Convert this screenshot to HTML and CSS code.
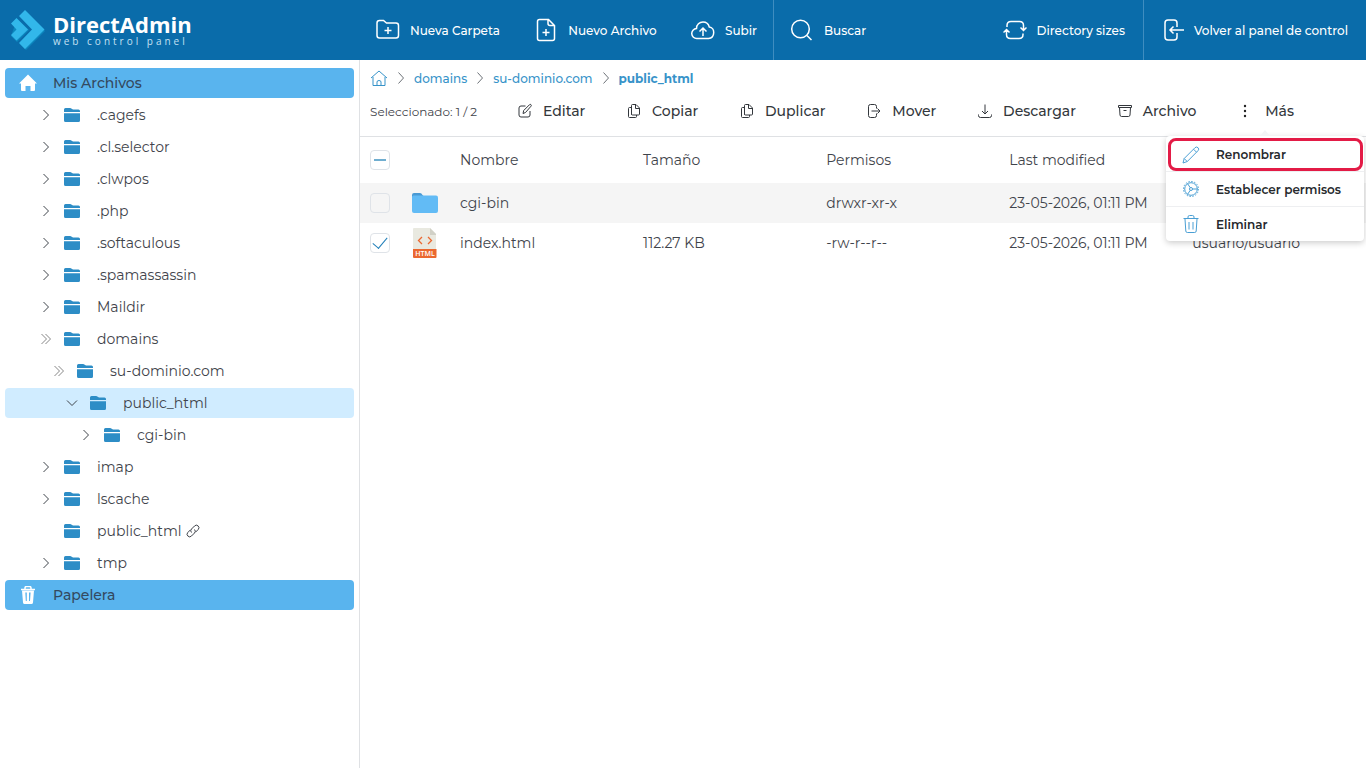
FILE: index.html
```html
<!DOCTYPE html>
<html lang="es">
<head>
<meta charset="utf-8">
<meta name="viewport" content="width=device-width, initial-scale=1">
<title>DirectAdmin - public_html</title>
<link rel="stylesheet" href="styles.css">
</head>
<body>
<svg class="defs" aria-hidden="true">
  <symbol id="folder" viewBox="0 0 16 14"><path d="M0 4V1.5Q0 0 1.5 0H6q1 0 1.7.7L9 1.5h5.500q1.500 0 1.500 1.500v1zM0 5.200h16v7.300q0 1.500-1.500 1.500h-13Q0 14 0 12.500z" fill="currentColor"/></symbol>
  <symbol id="right" viewBox="0 0 16 16"><path d="M5.500 3l5 5-5 5"/></symbol>
  <symbol id="crumb" viewBox="0 0 16 16"><path d="M5.500 2.500l5 5.500-5 5.500"/></symbol>
  <symbol id="double" viewBox="0 0 16 16"><path d="M3.500 3l5 5-5 5M7.500 3l5 5-5 5"/></symbol>
  <symbol id="down" viewBox="0 0 16 16"><path d="M3 5.500l5 5 5-5"/></symbol>
  <symbol id="copy" viewBox="0 0 16 16"><path d="M5.500 11.500V2.500q0-1 1-1H10l3.500 3.500v6q0 1-1 1h-6q-1 0-1-1zM9.500 1.500V5.500h4M5.500 4.500h-2q-1 0-1 1v8q0 1 1 1h6q1 0 1-1v-1.500"/></symbol>
</svg>

<header class="topbar">
  <a class="brand" href="#">
    <svg class="brand-mark" viewBox="0 0 34 40" aria-hidden="true">
      <path d="M15 1l19 20-19 19-6-6 13-14z" fill="#0c86be"/>
      <path d="M14 0l19.500 19.500L14 39l-6-6 13-13.500L8 6z" fill="#32b7ea"/>
      <path d="M6 9l12 11L6 32l-6-6z" fill="#0c86be"/>
      <path d="M5.500 8L17 19.500 5.500 30.500 0 25l5.500-5.500L0 13.500z" fill="#32b7ea"/>
    </svg>
    <span class="brand-text">
      <span class="brand-name">DirectAdmin</span>
      <span class="brand-tag">web control panel</span>
    </span>
  </a>
  <nav class="top-actions" aria-label="Acciones">
    <button class="top-btn" type="button">
      <svg class="icon24" viewBox="0 0 24 24"><path d="M1 5q0-2.500 2.500-2.500h4L10.500 5h9.500q2.500 0 2.500 2.500v10q0 2.500-2.500 2.500H3.500Q1 20 1 17.500zM12 9v7M8.500 12.500h7"/></svg>Nueva Carpeta</button>
    <button class="top-btn" type="button">
      <svg class="icon24" viewBox="0 0 24 24"><path d="M3.500 3.500q0-2 2-2h9l6 6v13q0 2-2 2h-13q-2 0-2-2zM14 1.500v4q0 2 2 2h4.500M12 11v7M8.500 14.500h7"/></svg>Nuevo Archivo</button>
    <button class="top-btn" type="button">
      <svg class="icon24" viewBox="0 0 24 24"><path d="M6 20.500a5 5 0 0 1-.5-10C5.500 6.500 8.500 4 12 4c3.500 0 5.500 2 6.300 5 6 .5 6 11-.8 11.500zM12 18v-7.500M8.500 13.500L12 10l3.500 3.500"/></svg>Subir</button>
  </nav>
  <button class="top-btn search" type="button">
    <svg class="icon24" viewBox="0 0 24 24"><circle cx="10.500" cy="11" r="8.800"/><path d="M17 17.500l4.500 4.500"/></svg>Buscar</button>
  <button class="top-btn sizes" type="button">
    <svg class="icon24" viewBox="0 0 24 24"><path d="M4 9V7.500q0-4 4-4h8.500q4 0 4 4V12M17.500 9.500l3 3 3-3M20 15.500v1q0 4-4 4H7.500q-4 0-4-4V12M.5 14.500l3-3 3 3"/></svg>Directory sizes</button>
  <a class="top-btn back" href="#">
    <svg class="icon20" viewBox="0 0 20 24"><path d="M13 9V5q0-3-3-3H4Q1 2 1 5v14q0 3 3 3h6q3 0 3-3v-4M20 12H6M9.500 8.500L6 12l3.500 3.500"/></svg>Volver al panel de control</a>
</header>

<div class="workspace">
  <aside class="sidebar">
    <ul class="tree">
      <li><a class="root" href="#"><svg class="root-icon" viewBox="0 0 18 18"><path d="M9 .5L18 9.500h-2v6.500q0 1-1 1h-3.500v-5h-5v5H3q-1 0-1-1V9.500H0z" fill="#fff"/></svg>Mis Archivos</a></li>
      <li><a class="node" href="#"><svg class="arrow"><use href="#right"/></svg><svg class="folder"><use href="#folder"/></svg>.cagefs</a></li>
      <li><a class="node" href="#"><svg class="arrow"><use href="#right"/></svg><svg class="folder"><use href="#folder"/></svg>.cl.selector</a></li>
      <li><a class="node" href="#"><svg class="arrow"><use href="#right"/></svg><svg class="folder"><use href="#folder"/></svg>.clwpos</a></li>
      <li><a class="node" href="#"><svg class="arrow"><use href="#right"/></svg><svg class="folder"><use href="#folder"/></svg>.php</a></li>
      <li><a class="node" href="#"><svg class="arrow"><use href="#right"/></svg><svg class="folder"><use href="#folder"/></svg>.softaculous</a></li>
      <li><a class="node" href="#"><svg class="arrow"><use href="#right"/></svg><svg class="folder"><use href="#folder"/></svg>.spamassassin</a></li>
      <li><a class="node" href="#"><svg class="arrow"><use href="#right"/></svg><svg class="folder"><use href="#folder"/></svg>Maildir</a></li>
      <li><a class="node" href="#"><svg class="arrow double"><use href="#double"/></svg><svg class="folder"><use href="#folder"/></svg>domains</a>
        <ul class="tree level-1">
          <li><a class="node" href="#"><svg class="arrow double"><use href="#double"/></svg><svg class="folder"><use href="#folder"/></svg>su-dominio.com</a></li>
        </ul>
        <ul class="tree level-2">
          <li><a class="node current" href="#"><svg class="arrow"><use href="#down"/></svg><svg class="folder"><use href="#folder"/></svg>public_html</a></li>
        </ul>
        <ul class="tree level-3">
          <li><a class="node" href="#"><svg class="arrow"><use href="#right"/></svg><svg class="folder"><use href="#folder"/></svg>cgi-bin</a></li>
        </ul>
      </li>
      <li><a class="node" href="#"><svg class="arrow"><use href="#right"/></svg><svg class="folder"><use href="#folder"/></svg>imap</a></li>
      <li><a class="node" href="#"><svg class="arrow"><use href="#right"/></svg><svg class="folder"><use href="#folder"/></svg>lscache</a></li>
      <li><a class="node" href="#"><svg class="arrow"></svg><svg class="folder"><use href="#folder"/></svg>public_html<svg class="link-icon" viewBox="0 0 14 14"><path d="M5.500 8.500a2.500 2.500 0 0 1 0-3.500l3-3a2.500 2.500 0 0 1 3.700 3.500L9.500 8.200M8.500 5.500a2.500 2.500 0 0 1 0 3.500l-3 3A2.500 2.500 0 0 1 1.800 8.500L4.500 5.800"/></svg></a></li>
      <li><a class="node" href="#"><svg class="arrow"><use href="#right"/></svg><svg class="folder"><use href="#folder"/></svg>tmp</a></li>
      <li><a class="root" href="#"><svg class="root-icon" viewBox="0 0 18 18"><path d="M2 3.500h14M6 3V2q0-1.500 1.500-1.500h3Q12 .5 12 2v1" stroke="#fff" stroke-width="1.500" fill="none"/><path fill-rule="evenodd" d="M3 4.500h12l-1 12q-.2 1.500-1.500 1.500h-7Q4.200 18 4 16.500zM6.300 6.500l.5 8.500h1V6.500zM10 6.500V15h1l.6-8.500z" fill="#fff"/></svg>Papelera</a></li>
    </ul>
  </aside>

  <main class="content">
    <nav class="crumbs" aria-label="Ruta">
      <a href="#" aria-label="Inicio"><svg class="home" viewBox="0 0 18 18"><path d="M1 9L9 2l8 7M3 8v8.500h12V8M7 16.500V13q0-1.500 2-1.500t2 1.500v3.500"/></svg></a>
      <svg class="sep"><use href="#crumb"/></svg><a href="#">domains</a>
      <svg class="sep"><use href="#crumb"/></svg><a href="#">su-dominio.com</a>
      <svg class="sep"><use href="#crumb"/></svg><a class="here" href="#">public_html</a>
    </nav>

    <div class="toolbar">
      <span class="selected">Seleccionado: 1 / 2</span>
      <div class="tools">
        <button class="tool" type="button"><svg class="icon16" viewBox="0 0 16 16"><path d="M8.500 3H4Q2 3 2 5v7q0 2 2 2h7q2 0 2-2V8M6 10.500l.7-3L12.500 1.700q.8-.7 1.500 0t0 1.500L8.500 9.500z"/></svg>Editar</button>
        <button class="tool" type="button"><svg class="icon16"><use href="#copy"/></svg>Copiar</button>
        <button class="tool" type="button"><svg class="icon16"><use href="#copy"/></svg>Duplicar</button>
        <button class="tool" type="button"><svg class="icon16" viewBox="0 0 16 16"><path d="M10.500 5.500v-2q0-2-2-2h-4q-2 0-2 2v9q0 2 2 2h4q2 0 2-2v-2M5.500 8H14M11.500 5.500L14 8l-2.500 2.500"/></svg>Mover</button>
        <button class="tool" type="button"><svg class="icon16" viewBox="0 0 16 16"><path d="M8 1.500v9.500M5 8l3 3 3-3M1.500 11.500v1q0 2 2 2h9q2 0 2-2v-1"/></svg>Descargar</button>
        <button class="tool" type="button"><svg class="icon16" viewBox="0 0 16 16"><path d="M1.500 2.500h13v2h-13zM2.500 4.500l.5 7.500q.2 1.500 1.500 1.500h7q1.300 0 1.500-1.500l.5-7.500M6.500 7.500h3"/></svg>Archivo</button>
        <button class="tool more" type="button" aria-expanded="true"><svg class="icon16" viewBox="0 0 16 16"><g fill="#222" stroke="none"><circle cx="8" cy="3" r="1.200"/><circle cx="8" cy="8" r="1.200"/><circle cx="8" cy="13" r="1.200"/></g></svg>Más</button>
      </div>
      <div class="menu">
        <button class="menu-item marked" type="button"><svg class="icon18" viewBox="0 0 18 18"><path d="M1 17l1.200-4.500L13 1.700q1.500-1.400 3 0t0 3L5.300 15.500zM2.200 12.500l3 3M11.500 3.200l3 3"/></svg>Renombrar</button>
        <button class="menu-item" type="button"><svg class="icon18" viewBox="0 0 18 18"><circle cx="9" cy="9" r="6.300"/><circle cx="9" cy="9" r="7.500" stroke-dasharray="1.500 1.445"/><circle cx="9" cy="9" r="1.500"/><path d="M10.500 9h5M8.200 7.700L5.500 3.500M8.200 10.300l-2.700 4.200"/></svg>Establecer permisos</button>
        <button class="menu-item" type="button"><svg class="icon18" viewBox="0 0 18 18"><path d="M1.500 3.500h15M6 3.500V2q0-1.500 1.500-1.500h3Q12 .5 12 2v1.500M3 4l.8 12q.1 1.500 1.500 1.500h7.400q1.400 0 1.500-1.500L15 4M7 7v7.500M11 7v7.500"/></svg>Eliminar</button>
      </div>
    </div>

    <table class="files">
      <colgroup><col class="c-check"><col class="c-type"><col class="c-data"><col class="c-data"><col class="c-data"><col class="c-data"><col></colgroup>
      <thead>
        <tr><th><input class="check partial" type="checkbox" aria-label="Seleccionar todo"></th><th></th><th>Nombre</th><th>Tamaño</th><th>Permisos</th><th>Last modified</th><th></th></tr>
      </thead>
      <tbody>
        <tr class="shaded"><td><input class="check" type="checkbox" aria-label="cgi-bin"></td>
          <td><svg class="type" viewBox="0 0 30 30"><path d="M2 7q0-2 2-2h6q1.500 0 2.500 2l1 1v6H2z" fill="#4a9ad4"/><path d="M2 9q0-1.500 1.500-1.500H26q2 0 2 2V23q0 2-2 2H4q-2 0-2-2z" fill="#62bbf5"/></svg></td>
          <td>cgi-bin</td><td></td><td>drwxr-xr-x</td><td>23-05-2026, 01:11 PM</td><td></td></tr>
        <tr><td><input class="check" type="checkbox" checked aria-label="index.html"></td>
          <td><svg class="type" viewBox="0 0 30 30"><path d="M4 0h16l6 6v15H3V1q0-1 1-1z" fill="#e9e9e0"/><path d="M20 0l6 6v1h-6z" fill="#d1d1c7"/><path d="M3 21h23.500v8q0 1-1 1H4q-1 0-1-1z" fill="#eb6830"/><path d="M12 9l-3.500 3.500L12 16M18 9l3.500 3.500L18 16" fill="none" stroke="#eb6830" stroke-width="1.300"/><text x="15" y="28" class="type-label">HTML</text></svg></td>
          <td>index.html</td><td>112.27 KB</td><td>-rw-r--r--</td><td>23-05-2026, 01:11 PM</td><td>usuario/usuario</td></tr>
      </tbody>
    </table>
  </main>
</div>
</body>
</html>
```

FILE: styles.css
```css
* { box-sizing: border-box; }

body {
  margin: 0;
  min-height: 100vh;
  display: flex;
  flex-direction: column;
  background: #fff;
  color: #3f444b;
  font-family: Montserrat, Inter, "Open Sans", sans-serif;
  font-size: 14px;
}

button {
  font: inherit;
  border: 0;
  background: none;
  padding: 0;
  cursor: pointer;
}

a { color: inherit; text-decoration: none; }

svg {
  flex: none;
  fill: none;
  stroke: currentColor;
}

.brand-mark path, .folder, .type, .root-icon { stroke: none; }

.defs { display: none; }

/* Top bar */
.topbar {
  display: flex;
  align-items: stretch;
  height: 60px;
  background: #0a6caa;
  color: #fff;
}

.brand {
  flex: none;
  display: flex;
  align-items: center;
  gap: 8px;
  width: 360px;
  padding-left: 11px;
}

.brand-mark { width: 34px; height: 40px; }

.brand-text { display: flex; flex-direction: column; }

.brand-name {
  font: bold 22px/22px "Open Sans", sans-serif;
}

.brand-tag {
  font: 10px/12px "Open Sans", sans-serif;
  letter-spacing: 3px;
  color: #c4e0f2;
}

.top-actions {
  flex: none;
  display: flex;
  justify-content: space-between;
  width: 414px;
  padding: 0 16px;
  border-right: 1px solid #3f8dc0;
}

.top-btn {
  display: flex;
  align-items: center;
  gap: 10px;
  color: #fff;
  font-size: 12px;
  font-weight: 500;
  white-space: nowrap;
}

.search { padding-left: 16px; }
.sizes { margin-left: auto; padding-right: 18px; }
.back { padding: 0 18px 0 20px; border-left: 1px solid #3f8dc0; }

.icon24 { width: 24px; height: 24px; stroke-width: 1.5; }
.icon20 { width: 20px; height: 24px; stroke-width: 1.5; }
.icon18 { width: 18px; height: 18px; }
.icon16 { width: 16px; height: 16px; }

/* Layout */
.workspace { flex: 1; display: flex; }

.sidebar {
  flex: none;
  width: 360px;
  padding: 8px 5px;
  border-right: 1px solid #dfe1e4;
}

/* Folder tree */
.tree {
  display: flex;
  flex-direction: column;
  gap: 2px;
  margin: 0;
  padding: 0;
  list-style: none;
}

.tree .tree { margin-top: 2px; }

.root, .node {
  display: flex;
  align-items: center;
  height: 30px;
  padding-bottom: 1px;
  border-radius: 4px;
}

.root {
  gap: 16px;
  padding-left: 14px;
  background: #59b4ee;
  color: #34495e;
  font-weight: 500;
}

.root-icon { width: 18px; height: 18px; }

.node { padding-left: 33px; }
.level-1 .node { padding-left: 46px; }
.level-2 .node { padding-left: 59px; }
.level-3 .node { padding-left: 73px; }
.current { background: #d0ecff; }

.arrow { width: 16px; height: 16px; margin-right: 10px; }
.double { color: #888; }
.folder { width: 16px; height: 14px; margin-right: 17px; color: #2d8dc6; }
.link-icon { width: 14px; height: 14px; margin-left: 4px; }

/* Path */
.content { flex: 1; min-width: 0; }

.crumbs {
  display: flex;
  align-items: center;
  gap: 5px;
  height: 36px;
  padding-left: 10px;
  color: #3793c9;
  font-size: 12px;
  font-weight: 500;
}

.crumbs a { display: flex; }
.crumbs .here { font-weight: 700; }
.home { width: 18px; height: 18px; }
.sep { width: 16px; height: 16px; color: #6d7278; }

/* Toolbar and its menu */
.toolbar {
  position: relative;
  display: flex;
  align-items: center;
  height: 41px;
  padding: 0 72px 10px 10px;
  border-bottom: 1px solid #dfe1e4;
}

.selected { flex: none; width: 147px; font-size: 12px; }

.tools { flex: 1; display: flex; justify-content: space-between; }

.tool {
  display: flex;
  align-items: center;
  gap: 10px;
  color: #33373c;
  font-size: 14px;
  font-weight: 500;
}

.more { gap: 12px; }

.menu {
  position: absolute;
  top: 40px;
  right: 2px;
  z-index: 2;
  width: 198px;
  border-radius: 4px;
  background: #fff;
  box-shadow: 0 2px 6px rgba(0, 0, 0, 0.2);
}

.menu::before {
  content: "";
  position: absolute;
  top: -6px;
  left: 94px;
  border: 5px solid transparent;
  border-top: 0;
  border-bottom: 6px solid #f3f4f6;
}

.menu-item {
  display: flex;
  align-items: center;
  gap: 16px;
  width: 100%;
  height: 35px;
  padding-left: 16px;
  border-top: 1px solid #eeeff1;
  color: #26292d;
  font-size: 12px;
  font-weight: 600;
}

.menu-item svg { color: #4a9fd4; }

.marked {
  width: 195px;
  margin: 2px 0 0 2px;
  padding-left: 11px;
  height: 33px;
  border: 3px solid #e31b46;
  border-radius: 8px;
}

/* File list */
.files {
  width: 100%;
  table-layout: fixed;
  border-collapse: collapse;
}

.c-check, .c-type { width: 50px; }
.c-data { width: 18.2%; }

.files th, .files td {
  height: 40px;
  padding: 0;
  text-align: left;
  font-weight: 400;
  font-size: 14px;
  white-space: nowrap;
}

.files th { height: 46px; }
.files .shaded { background: #f5f5f5; }

.check {
  appearance: none;
  display: grid;
  place-items: center;
  width: 20px;
  height: 20px;
  margin: 0 0 0 10px;
  border: 1px solid #dfe3e8;
  border-radius: 4px;
}

.partial::before {
  content: "";
  width: 12px;
  height: 2px;
  background: #70aed0;
}

.check:checked::before {
  content: "";
  width: 7px;
  height: 13px;
  margin-bottom: 4px;
  border: solid #207fb9;
  border-width: 0 1px 1px 0;
  transform: rotate(40deg);
}

.type { display: block; width: 30px; height: 30px; }

.type-label {
  font: 600 7px "Open Sans", sans-serif;
  text-anchor: middle;
  fill: #fff;
}
```
